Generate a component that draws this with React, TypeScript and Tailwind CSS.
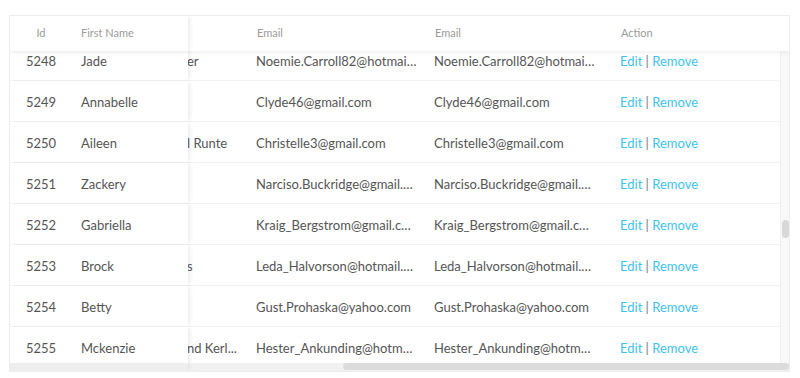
type Row = {
  id: number;
  first: string;
  lastTail: string;
  email: string;
};

const rows: Row[] = [
  { id: 5248, first: 'Jade', lastTail: 'er', email: 'Noemie.Carroll82@hotmail.com' },
  { id: 5249, first: 'Annabelle', lastTail: '', email: 'Clyde46@gmail.com' },
  { id: 5250, first: 'Aileen', lastTail: 'l Runte', email: 'Christelle3@gmail.com' },
  { id: 5251, first: 'Zackery', lastTail: '', email: 'Narciso.Buckridge@gmail.com' },
  { id: 5252, first: 'Gabriella', lastTail: '', email: 'Kraig_Bergstrom@gmail.com' },
  { id: 5253, first: 'Brock', lastTail: 's', email: 'Leda_Halvorson@hotmail.com' },
  { id: 5254, first: 'Betty', lastTail: '', email: 'Gust.Prohaska@yahoo.com' },
  { id: 5255, first: 'Mckenzie', lastTail: 'nd Kerl...', email: 'Hester_Ankunding@hotmail.com' },
];

const fixedShadow = 'shadow-[3px_0_4px_-1px_rgba(0,0,0,0.08)]';

export default function App() {
  return (
    <div className="w-[800px] h-[378px] bg-white pt-[15px] pl-[9px] font-['Lato','Open_Sans',sans-serif]">
      <div className="w-[781px] h-[357px] border border-[#ededed] flex flex-col overflow-hidden">
        {/* Header */}
        <div className="relative z-20 h-[35px] flex items-center bg-white text-[11px] text-[#9b9b9b] shadow-[0_2px_4px_rgba(0,0,0,0.06)]">
          <div className={`relative z-10 h-full flex items-center bg-white ${fixedShadow}`}>
            <div className="w-[62px] text-center">Id</div>
            <div className="w-[116px] pl-[9px]">First Name</div>
          </div>
          <div className="w-[57px]" />
          <div className="w-[178px] pl-3">Email</div>
          <div className="w-[186px] pl-3">Email</div>
          <div className="w-[170px] pl-3">Action</div>
          <div className="w-[9px]" />
        </div>

        {/* Body */}
        <div className="h-[312px] flex overflow-hidden">
          <div className="w-[770px] overflow-hidden">
            <div className="-mt-[11px]">
              {rows.map((r) => (
                <div key={r.id} className="h-[41px] pt-[3px] flex items-center border-b border-[#f3f3f3] text-[13px] text-[#555]">
                  <div className={`relative z-10 -mt-[3px] pt-[3px] h-[40px] flex items-center bg-white ${fixedShadow}`}>
                    <div className="w-[62px] text-center">{r.id}</div>
                    <div className="w-[116px] pl-[9px]">{r.first}</div>
                  </div>
                  <div className="w-[57px] whitespace-nowrap overflow-hidden -ml-[1px]">{r.lastTail}</div>
                  <div className="w-[178px] pl-3 pr-[5px] truncate">{r.email}</div>
                  <div className="w-[186px] pl-3 pr-[13px] truncate">{r.email}</div>
                  <div className="w-[170px] pl-3 whitespace-nowrap">
                    <span className="text-[#3ec3f0]">Edit</span>
                    <span className="text-[#777]"> | </span>
                    <span className="text-[#3ec3f0]">Remove</span>
                  </div>
                </div>
              ))}
            </div>
          </div>
          {/* vertical scrollbar */}
          <div className="w-[9px] bg-[#f8f8f8] border-l border-[#f0f0f0] flex flex-col">
            <div className="h-[169px]" />
            <div className="mx-auto w-[7px] h-[18px] rounded-full bg-[#d8d8d8]" />
          </div>
        </div>

        {/* horizontal scrollbar */}
        <div className="h-[8px] flex bg-[#f1f1f1]">
          <div className={`w-[178px] h-full bg-[#eeeeee] ${fixedShadow}`} />
          <div className="w-[155px]" />
          <div className="w-[446px] h-[7px] rounded-full bg-[#dcdcdc]" />
        </div>
      </div>
    </div>
  );
}
